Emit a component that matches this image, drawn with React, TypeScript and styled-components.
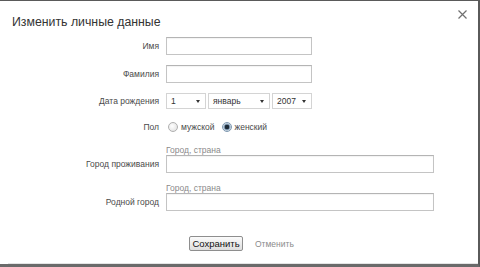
import React from 'react'
import styled, { createGlobalStyle } from 'styled-components'

const GlobalStyle = createGlobalStyle`
  html, body {
    margin: 0;
    padding: 0;
    background: #ffffff;
  }
  body {
    font-family: 'Liberation Sans', Arial, sans-serif;
  }
`

const Window = styled.div`
  position: relative;
  box-sizing: border-box;
  width: 480px;
  height: 267px;
  background: #ffffff;
  border-top: 1px solid #5a5a5a;
  border-right: 2px solid #5a5a5a;
  border-bottom: 3px solid #6a6a6a;
  display: flex;
  flex-direction: column;
`

const Header = styled.div`
  display: flex;
  justify-content: space-between;
  align-items: flex-start;
  padding: 12px 10px 0 12px;
  height: 23px;
`

const Title = styled.h1`
  margin: 0;
  font-size: 12.3px;
  font-weight: normal;
  line-height: 18px;
  color: #333333;
`

const Close = styled.button`
  margin: -5px 0 0 0;
  padding: 0;
  border: 0;
  background: none;
  width: 12px;
  height: 12px;
  display: flex;
  align-items: center;
  justify-content: center;
  cursor: pointer;
`

const Form = styled.div`
  display: flex;
  flex-direction: column;
  padding-top: 1px;
`

const Row = styled.div<{ $h: number; $mt?: number }>`
  display: grid;
  grid-template-columns: 159px auto;
  column-gap: 7px;
  align-items: center;
  height: ${({ $h }) => $h}px;
  margin-top: ${({ $mt }) => $mt ?? 0}px;
`

const Label = styled.label`
  text-align: right;
  font-size: 8.5px;
  color: #4a4a4a;
  white-space: nowrap;
`

const Hint = styled.div`
  font-size: 8.5px;
  color: #8a8a8a;
  line-height: 10px;
`

const Input = styled.input<{ $w: number }>`
  box-sizing: border-box;
  width: ${({ $w }) => $w}px;
  height: 18px;
  margin: 0;
  border: 1px solid #c4c4c4;
  border-top-color: #b4b4b4;
  background: #ffffff;
  outline: none;
  box-shadow: inset 0 1px 1px rgba(0, 0, 0, 0.05);
`

const Selects = styled.div`
  display: flex;
  gap: 2px;
`

const Select = styled.div<{ $w: number }>`
  box-sizing: border-box;
  width: ${({ $w }) => $w}px;
  height: 16px;
  border: 1px solid #d4d4d4;
  background: #ffffff;
  display: flex;
  align-items: center;
  justify-content: space-between;
  padding: 0 5px 0 4px;
  font-size: 8.5px;
  color: #333333;
`

const Arrow = styled.span`
  width: 0;
  height: 0;
  border-left: 2.5px solid transparent;
  border-right: 2.5px solid transparent;
  border-top: 3px solid #333333;
`

const Radios = styled.div`
  display: flex;
  align-items: center;
  gap: 7px;
  padding-left: 2px;
`

const RadioLabel = styled.label`
  display: flex;
  align-items: center;
  gap: 3px;
  font-size: 8.5px;
  color: #4a4a4a;
`

const RadioDot = styled.span<{ $checked?: boolean }>`
  box-sizing: border-box;
  width: 10px;
  height: 10px;
  border-radius: 50%;
  border: 1px solid ${({ $checked }) => ($checked ? '#7e98b0' : '#b0b0b0')};
  background: ${({ $checked }) =>
    $checked
      ? 'radial-gradient(circle, #1e2a36 0 2px, #6f8aa4 2.5px, #dfe7ef 4px)'
      : 'radial-gradient(circle at 40% 40%, #ffffff, #dcdcdc)'};
`

const Actions = styled.div`
  display: flex;
  align-items: center;
  gap: 12px;
  padding-left: 189px;
  margin-top: 25px;
`

const SaveButton = styled.button`
  box-sizing: border-box;
  height: 15px;
  width: 54px;
  padding: 0;
  border: 1px solid #8e8e8e;
  border-radius: 2px;
  background: linear-gradient(#fbfbfb, #dedede);
  font-family: 'Liberation Sans', Arial, sans-serif;
  font-size: 9.5px;
  color: #111111;
`

const CancelLink = styled.span`
  font-size: 8.5px;
  color: #8c8c8c;
`

const BottomRule = styled.div`
  margin-top: auto;
  margin-left: 8px;
  height: 1px;
  background: #e4e4e4;
`

export default function App() {
  return (
    <>
      <GlobalStyle />
      <Window>
        <Header>
          <Title>Изменить личные данные</Title>
          <Close aria-label="Закрыть">
            <svg width="9" height="9" viewBox="0 0 9 9">
              <path d="M0.5 0.5 L8.5 8.5 M8.5 0.5 L0.5 8.5" stroke="#707070" strokeWidth="1.2" />
            </svg>
          </Close>
        </Header>
        <Form>
          <Row $h={18}>
            <Label>Имя</Label>
            <Input $w={146} />
          </Row>
          <Row $h={18} $mt={10}>
            <Label>Фамилия</Label>
            <Input $w={146} />
          </Row>
          <Row $h={16} $mt={10}>
            <Label>Дата рождения</Label>
            <Selects>
              <Select $w={40}>
                1<Arrow />
              </Select>
              <Select $w={62}>
                январь<Arrow />
              </Select>
              <Select $w={40}>
                2007<Arrow />
              </Select>
            </Selects>
          </Row>
          <Row $h={12} $mt={12}>
            <Label>Пол</Label>
            <Radios>
              <RadioLabel>
                <RadioDot />
                мужской
              </RadioLabel>
              <RadioLabel>
                <RadioDot $checked />
                женский
              </RadioLabel>
            </Radios>
          </Row>
          <Row $h={10} $mt={12}>
            <span />
            <Hint>Город, страна</Hint>
          </Row>
          <Row $h={18}>
            <Label>Город проживания</Label>
            <Input $w={268} />
          </Row>
          <Row $h={10} $mt={10}>
            <span />
            <Hint>Город, страна</Hint>
          </Row>
          <Row $h={18}>
            <Label>Родной город</Label>
            <Input $w={268} />
          </Row>
          <Actions>
            <SaveButton>Сохранить</SaveButton>
            <CancelLink>Отменить</CancelLink>
          </Actions>
        </Form>
        <BottomRule />
      </Window>
    </>
  )
}
